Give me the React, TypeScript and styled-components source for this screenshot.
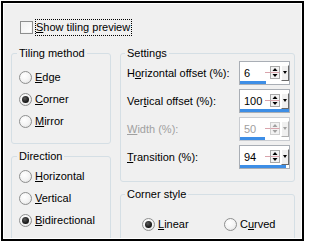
import React from 'react';
import styled, { createGlobalStyle } from 'styled-components';

const GlobalStyle = createGlobalStyle`
  html, body {
    margin: 0;
    padding: 0;
    background: #fff;
  }
  body {
    font-family: "Liberation Sans", Arial, sans-serif;
    font-size: 11px;
    color: #000;
  }
`;

const Frame = styled.div`
  box-sizing: border-box;
  margin: 1px 0 0 1px;
  width: 303px;
  height: 240px;
  border: 2px solid #000;
  overflow: hidden;
`;

const Panel = styled.div`
  box-sizing: border-box;
  height: 100%;
  border: 1px solid #fff;
  background: #f0f0f0;
  padding: 15px 0 0 7px;
  overflow: hidden;
`;

const PreviewRow = styled.div`
  display: flex;
  align-items: center;
  height: 17px;
  padding-left: 9px;
`;

const CheckBox = styled.span`
  box-sizing: border-box;
  width: 13px;
  height: 13px;
  border: 1px solid #8e8f8f;
  background: linear-gradient(135deg, #f0f0f0, #fff);
  box-shadow: inset 0 0 0 1px #f4f4f4;
  margin-right: 2px;
  flex: none;
`;

const FocusText = styled.span`
  border: 1px dotted #000;
  padding: 1px 1px 1px 0;
  line-height: 13px;
`;

const Key = styled.span`
  text-decoration: underline;
  text-underline-offset: 1px;
`;

const Columns = styled.div`
  display: grid;
  grid-template-columns: 100px 175px;
  column-gap: 9px;
  margin-top: 11px;
  align-items: start;
`;

const Column = styled.div`
  display: flex;
  flex-direction: column;
  gap: 6px;
`;

const Group = styled.fieldset<{ $top: number; $bottom: number; $min?: number }>`
  margin: 0;
  min-width: 0;
  border: 1px solid #d5dfe5;
  border-radius: 3px;
  padding: ${p => `${p.$top}px 0 ${p.$bottom}px 0`};
  min-height: ${p => (p.$min ? `${p.$min}px` : 'auto')};
  box-sizing: border-box;
`;

const Legend = styled.legend<{ $indent: number }>`
  padding: 0 2px;
  margin-left: ${p => p.$indent}px;
  line-height: 13px;
`;

const GroupBody = styled.div<{ $left: number; $right?: number }>`
  padding-left: ${p => p.$left}px;
  padding-right: ${p => p.$right ?? 0}px;
`;

const RadioRow = styled.div`
  display: flex;
  align-items: center;
  height: 22px;
`;

const RadioGrid = styled.div`
  display: grid;
  grid-template-columns: 82px 82px;
`;

const RadioDot = styled.span<{ $on?: boolean }>`
  box-sizing: border-box;
  width: 13px;
  height: 13px;
  border-radius: 50%;
  border: 1px solid #8e8f8f;
  background: radial-gradient(circle at 40% 35%, #ffffff 0%, #f3f3f3 55%, #d9d9d9 100%);
  display: inline-flex;
  align-items: center;
  justify-content: center;
  margin-right: 3px;
  flex: none;
  &::after {
    content: '';
    width: 7px;
    height: 7px;
    border-radius: 50%;
    background: radial-gradient(circle at 40% 35%, #5a5a5a 0%, #111 70%);
    display: ${p => (p.$on ? 'block' : 'none')};
  }
`;

const SettingRow = styled.div<{ $disabled?: boolean }>`
  display: grid;
  grid-template-columns: 1fr 51px;
  align-items: center;
  height: 24px;
  color: ${p => (p.$disabled ? '#a0a0a0' : '#000')};
`;

const SettingList = styled.div`
  display: flex;
  flex-direction: column;
  gap: 4px;
`;

const SpinBox = styled.div<{ $disabled?: boolean }>`
  box-sizing: border-box;
  height: 24px;
  background: #fff;
  border: 1px solid ${p => (p.$disabled ? '#c9ccd1' : '#a9aeb5')};
  display: flex;
  flex-direction: column;
`;

const SpinTop = styled.div`
  display: flex;
  align-items: center;
  height: 19px;
`;

const SpinValue = styled.span<{ $disabled?: boolean }>`
  flex: 1;
  padding-left: 4px;
  padding-top: 2px;
  font-size: 11px;
  color: ${p => (p.$disabled ? '#a0a0a0' : '#000')};
`;

const DropBtn = styled.span<{ $disabled?: boolean }>`
  box-sizing: border-box;
  width: 8px;
  height: 16px;
  margin: 2px 0 0 1px;
  background: #f0f0f0;
  border: 1px solid;
  border-color: #fff ${p => (p.$disabled ? '#b0b0b0' : '#6a6a6a')} ${p => (p.$disabled ? '#b0b0b0' : '#6a6a6a')} #fff;
  display: flex;
  align-items: center;
  justify-content: center;
  &::after {
    content: '';
    border-left: 2.5px solid transparent;
    border-right: 2.5px solid transparent;
    border-top: 3px solid ${p => (p.$disabled ? '#a0a0a0' : '#000')};
  }
`;

const BarTrack = styled.div`
  height: 3px;
`;

const BarFill = styled.div`
  height: 100%;
  background: #3d8ee6;
`;

function SpinArrows({ disabled }: { disabled?: boolean }) {
  const c = disabled ? '#a0a0a0' : '#000';
  return (
    <svg width="15" height="14" viewBox="0 0 15 14" style={{ marginTop: 2 }}>
      <line x1="0" y1="6.5" x2="15" y2="6.5" stroke="#d9a4ac" />
      <rect x="5.5" y="0.5" width="9" height="12" fill="#f2f2f2" stroke={disabled ? '#cfcfcf' : '#a8a8a8'} />
      <line x1="5.5" y1="6.5" x2="14.5" y2="6.5" stroke="#d9a4ac" />
      <path d="M10 2 L12.5 5 L7.5 5 Z" fill={c} />
      <path d="M7.5 8 L12.5 8 L10 11 Z" fill={c} />
    </svg>
  );
}

type Setting = {
  pre: string;
  key: string;
  post: string;
  value: number;
  min: number;
  max: number;
  disabled?: boolean;
};

const settings: Setting[] = [
  { pre: 'H', key: 'o', post: 'rizontal offset (%):', value: 6, min: -100, max: 100 },
  { pre: 'Ver', key: 't', post: 'ical offset (%):', value: 100, min: -100, max: 100 },
  { pre: '', key: 'W', post: 'idth (%):', value: 50, min: 0, max: 100, disabled: true },
  { pre: '', key: 'T', post: 'ransition (%):', value: 94, min: 0, max: 100 },
];

type Option = { pre: string; key: string; post: string; on?: boolean };

const tiling: Option[] = [
  { pre: '', key: 'E', post: 'dge' },
  { pre: '', key: 'C', post: 'orner', on: true },
  { pre: '', key: 'M', post: 'irror' },
];

const direction: Option[] = [
  { pre: '', key: 'H', post: 'orizontal' },
  { pre: '', key: 'V', post: 'ertical' },
  { pre: '', key: 'B', post: 'idirectional', on: true },
];

const corner: Option[] = [
  { pre: '', key: 'L', post: 'inear', on: true },
  { pre: 'C', key: 'u', post: 'rved' },
];

function Radio({ opt }: { opt: Option }) {
  return (
    <RadioRow>
      <RadioDot $on={opt.on} />
      <span>
        {opt.pre}
        <Key>{opt.key}</Key>
        {opt.post}
      </span>
    </RadioRow>
  );
}

export default function App() {
  return (
    <>
      <GlobalStyle />
      <Frame>
        <Panel>
          <PreviewRow>
            <CheckBox />
            <FocusText>
              <Key>S</Key>how tiling preview
            </FocusText>
          </PreviewRow>
          <Columns>
            <Column>
              <Group $top={6} $bottom={11}>
                <Legend $indent={5}>Tiling method</Legend>
                <GroupBody $left={7}>
                  {tiling.map(o => (
                    <Radio key={o.post} opt={o} />
                  ))}
                </GroupBody>
              </Group>
              <Group $top={2} $bottom={0} $min={110}>
                <Legend $indent={5}>Direction</Legend>
                <GroupBody $left={7}>
                  {direction.map(o => (
                    <Radio key={o.post} opt={o} />
                  ))}
                </GroupBody>
              </Group>
            </Column>
            <Column>
              <Group $top={1} $bottom={12}>
                <Legend $indent={4}>Settings</Legend>
                <GroupBody $left={6} $right={4}>
                  <SettingList>
                    {settings.map(s => {
                      const pct = ((s.value - s.min) / (s.max - s.min)) * 100;
                      return (
                        <SettingRow key={s.post} $disabled={s.disabled}>
                          <span>
                            {s.pre}
                            <Key>{s.key}</Key>
                            {s.post}
                          </span>
                          <SpinBox $disabled={s.disabled}>
                            <SpinTop>
                              <SpinValue $disabled={s.disabled}>{s.value}</SpinValue>
                              <SpinArrows disabled={s.disabled} />
                              <DropBtn $disabled={s.disabled} />
                            </SpinTop>
                            <BarTrack>
                              <BarFill style={{ width: `${pct}%` }} />
                            </BarTrack>
                          </SpinBox>
                        </SettingRow>
                      );
                    })}
                  </SettingList>
                </GroupBody>
              </Group>
              <Group $top={12} $bottom={0} $min={80}>
                <Legend $indent={4}>Corner style</Legend>
                <GroupBody $left={21}>
                  <RadioGrid>
                    {corner.map(o => (
                      <Radio key={o.post} opt={o} />
                    ))}
                  </RadioGrid>
                </GroupBody>
              </Group>
            </Column>
          </Columns>
        </Panel>
      </Frame>
    </>
  );
}
